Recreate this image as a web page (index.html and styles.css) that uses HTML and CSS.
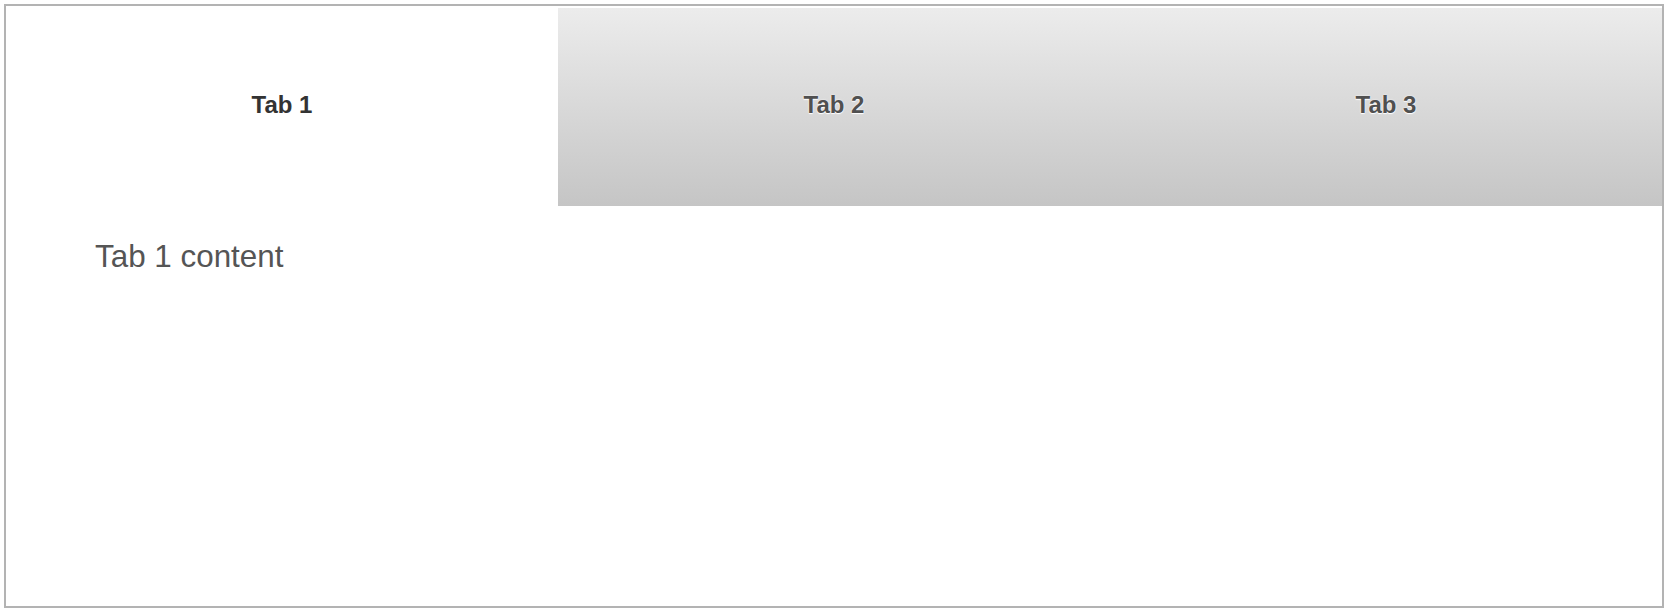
FILE: index.html
```html
<!DOCTYPE html>
<html lang="en">
<head>
<meta charset="utf-8">
<title>Tabs</title>
<link rel="stylesheet" href="styles.css">
</head>
<body>
<div class="tabs">
  <div class="tab-bar">
    <div class="tab active">Tab 1</div>
    <div class="tab">Tab 2</div>
    <div class="tab">Tab 3</div>
  </div>
  <div class="panel">Tab 1 content</div>
</div>
</body>
</html>
```
FILE: styles.css
```css
html, body {
  margin: 0;
  padding: 0;
  background: #fff;
}
body {
  margin: 4px;
  font-family: "Liberation Sans", Arial, sans-serif;
}
.tabs {
  box-sizing: border-box;
  height: 604px;
  border: 2px solid #b3b3b3;
  display: flex;
  flex-direction: column;
}
.tab-bar {
  display: flex;
  margin-top: 2px;
  height: 198px;
}
.tab {
  flex: 1 1 0;
  display: flex;
  align-items: center;
  justify-content: center;
  padding-bottom: 4px;
  box-sizing: border-box;
  font-size: 24px;
  font-weight: bold;
  color: #505050;
  text-shadow: 0 0 2px #fff, 0 1px 1px #fff;
  background: linear-gradient(to bottom, #ececec, #c5c5c5);
}
.tab.active {
  background: #fff;
  color: #333;
  text-shadow: none;
}
.panel {
  padding: 33px 0 0 89px;
  font-size: 31.4px;
  color: #555;
}
```
